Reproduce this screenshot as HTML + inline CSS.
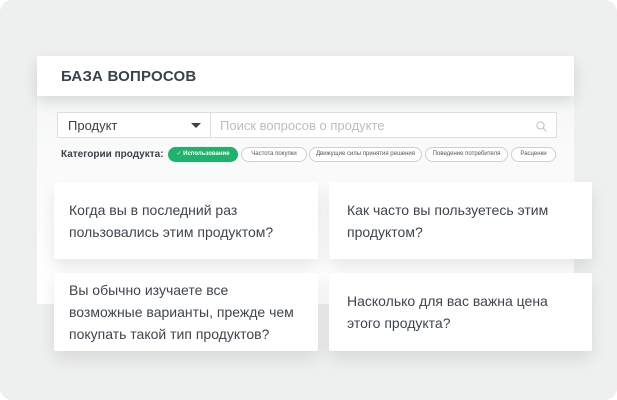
<!DOCTYPE html><html><head><meta charset="utf-8"><style>
*{margin:0;padding:0;box-sizing:border-box}
body{width:617px;height:400px;background:#fff;font-family:"Liberation Sans","DejaVu Sans",sans-serif;position:relative;overflow:hidden}
.bg{position:absolute;left:0;top:0;width:617px;height:400px;background:#eeefef;border-radius:12px}
.panel{position:absolute;left:37px;top:96px;width:537px;height:208px;background:linear-gradient(#f6f7f7,#fbfbfb 40%,#fff);}
.head{position:absolute;left:37px;top:56px;width:537px;height:40px;background:#fff;box-shadow:0 6px 14px rgba(0,0,0,.12)}
.head span{position:absolute;left:24px;top:12px;font-size:15px;font-weight:bold;color:#3a424c;letter-spacing:.2px}
.sel{position:absolute;left:57px;top:112px;width:154px;height:26px;border:1px solid #dcdfe2;background:#fff;font-size:13px;color:#3a424c;padding:5px 0 0 10px}
.sel:after{content:"";position:absolute;right:9px;top:10px;border:5px solid transparent;border-top:5px solid #3a424c;border-bottom:0}
.srch{position:absolute;left:210px;top:112px;width:347px;height:26px;border:1px solid #dcdfe2;background:#fff;font-size:13px;color:#b9bdc2;padding:5px 0 0 9px}
.cat{position:absolute;left:61px;top:149px;font-size:10px;font-weight:bold;color:#3a424c}
.pill{position:absolute;top:147px;height:15px;border:1px solid #ccd0d4;border-radius:8px;font-size:6px;color:#555;text-align:center;line-height:13px;background:#fff}
.pill.on{background:#1fb26a;border-color:#1fb26a;color:#fff;font-weight:bold}
.card{position:absolute;background:#fff;border-radius:2px;box-shadow:0 8px 16px rgba(0,0,0,.09);font-size:14px;line-height:22px;color:#3d4550;padding-left:15px;display:flex;align-items:center}
</style></head><body>
<div class="bg"></div>
<div class="panel"></div>
<div class="head"><span>БАЗА ВОПРОСОВ</span></div>
<div class="sel">Продукт</div>
<div class="srch">Поиск вопросов о продукте
<svg style="position:absolute;right:9px;top:8px" width="11" height="11" viewBox="0 0 11 11"><circle cx="4.5" cy="4.5" r="3.6" fill="none" stroke="#b9bdc2" stroke-width="1"/><line x1="7.2" y1="7.2" x2="10.5" y2="10.5" stroke="#b9bdc2"/></svg></div>
<div class="cat">Категории продукта:</div>
<div class="pill on" style="left:168px;width:70px">✓ Использование</div>
<div class="pill" style="left:241px;width:66px">Частота покупки</div>
<div class="pill" style="left:309px;width:113px">Движущие силы принятия решения</div>
<div class="pill" style="left:425px;width:83px">Поведение потребителя</div>
<div class="pill" style="left:511px;width:45px">Расценки</div>
<div class="card" style="left:54px;top:182px;width:264px;height:77px">Когда вы в последний раз<br>пользовались этим продуктом?</div>
<div class="card" style="left:329px;top:182px;width:263px;height:77px;padding-left:18px">Как часто вы пользуетесь этим<br>продуктом?</div>
<div class="card" style="left:54px;top:273px;width:264px;height:78px">Вы обычно изучаете все<br>возможные варианты, прежде чем<br>покупать такой тип продуктов?</div>
<div class="card" style="left:329px;top:273px;width:263px;height:78px;padding-left:18px">Насколько для вас важна цена<br>этого продукта?</div>
</body></html>
